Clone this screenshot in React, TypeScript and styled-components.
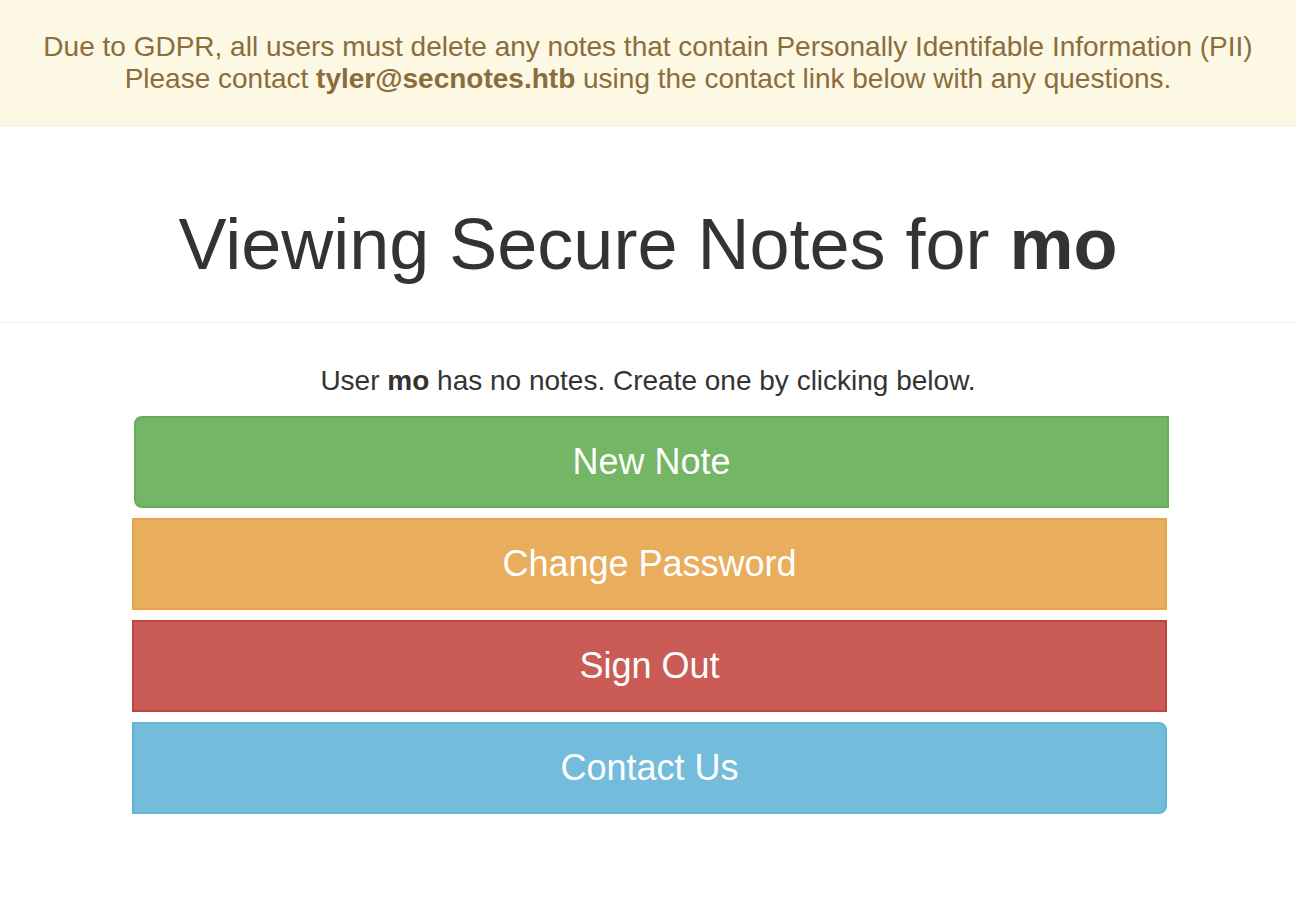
import React from "react";
import styled, { createGlobalStyle } from "styled-components";

const Global = createGlobalStyle`
  html, body { margin: 0; padding: 0; background: #fff; }
  body { font-family: "Liberation Sans", Arial, Helvetica, sans-serif; color: #333; }
`;

const Banner = styled.div`
  background: #fcf8e3;
  border-bottom: 1px solid #faebcc;
  color: #8a6d3b;
  font-size: 28px;
  line-height: 32px;
  text-align: center;
  padding: 31px 10px 30px;
`;

const Header = styled.div`
  border-bottom: 1px solid #eee;
  box-sizing: border-box;
  height: 197px;
  padding-top: 79px;
  text-align: center;
`;

const Title = styled.h1`
  margin: 0;
  font-size: 72px;
  font-weight: 400;
  line-height: 1.1;
  color: #333;
`;

const Body = styled.div`
  padding-top: 42px;
  text-align: center;
`;

const Message = styled.p`
  margin: 0 0 19px;
  font-size: 28px;
  line-height: 32px;
  color: #333;
`;

const Group = styled.div`
  margin-left: 132px;
  display: flex;
  flex-direction: column;
  align-items: flex-start;
  gap: 10px;
`;

type Variant = "success" | "warning" | "danger" | "info";

const palette: Record<Variant, { bg: string; border: string }> = {
  success: { bg: "#74b566", border: "#66ab5a" },
  warning: { bg: "#e8ae5e", border: "#e5a44c" },
  danger: { bg: "#cb5b55", border: "#c2433d" },
  info: { bg: "#73bcdb", border: "#62b3d5" },
};

const Button = styled.a<{ $variant: Variant; $radius: string; $shift?: number }>`
  display: flex;
  align-items: center;
  justify-content: center;
  box-sizing: border-box;
  width: 1035px;
  height: 92px;
  margin-left: ${(p) => p.$shift ?? 0}px;
  background: ${(p) => palette[p.$variant].bg};
  border: 2px solid ${(p) => palette[p.$variant].border};
  border-radius: ${(p) => p.$radius};
  color: #fff;
  font-size: 36px;
  text-decoration: none;
  cursor: pointer;
`;

export default function App() {
  return (
    <>
      <Global />
      <Banner>
        Due to GDPR, all users must delete any notes that contain Personally Identifable Information (PII)
        <br />
        Please contact <strong>tyler@secnotes.htb</strong> using the contact link below with any questions.
      </Banner>
      <Header>
        <Title>
          Viewing Secure Notes for <strong>mo</strong>
        </Title>
      </Header>
      <Body>
        <Message>
          User <strong>mo</strong> has no notes. Create one by clicking below.
        </Message>
        <Group>
          <Button $variant="success" $radius="8px 0 0 8px" $shift={2}>New Note</Button>
          <Button $variant="warning" $radius="0">Change Password</Button>
          <Button $variant="danger" $radius="0">Sign Out</Button>
          <Button $variant="info" $radius="0 8px 8px 0">Contact Us</Button>
        </Group>
      </Body>
    </>
  );
}
